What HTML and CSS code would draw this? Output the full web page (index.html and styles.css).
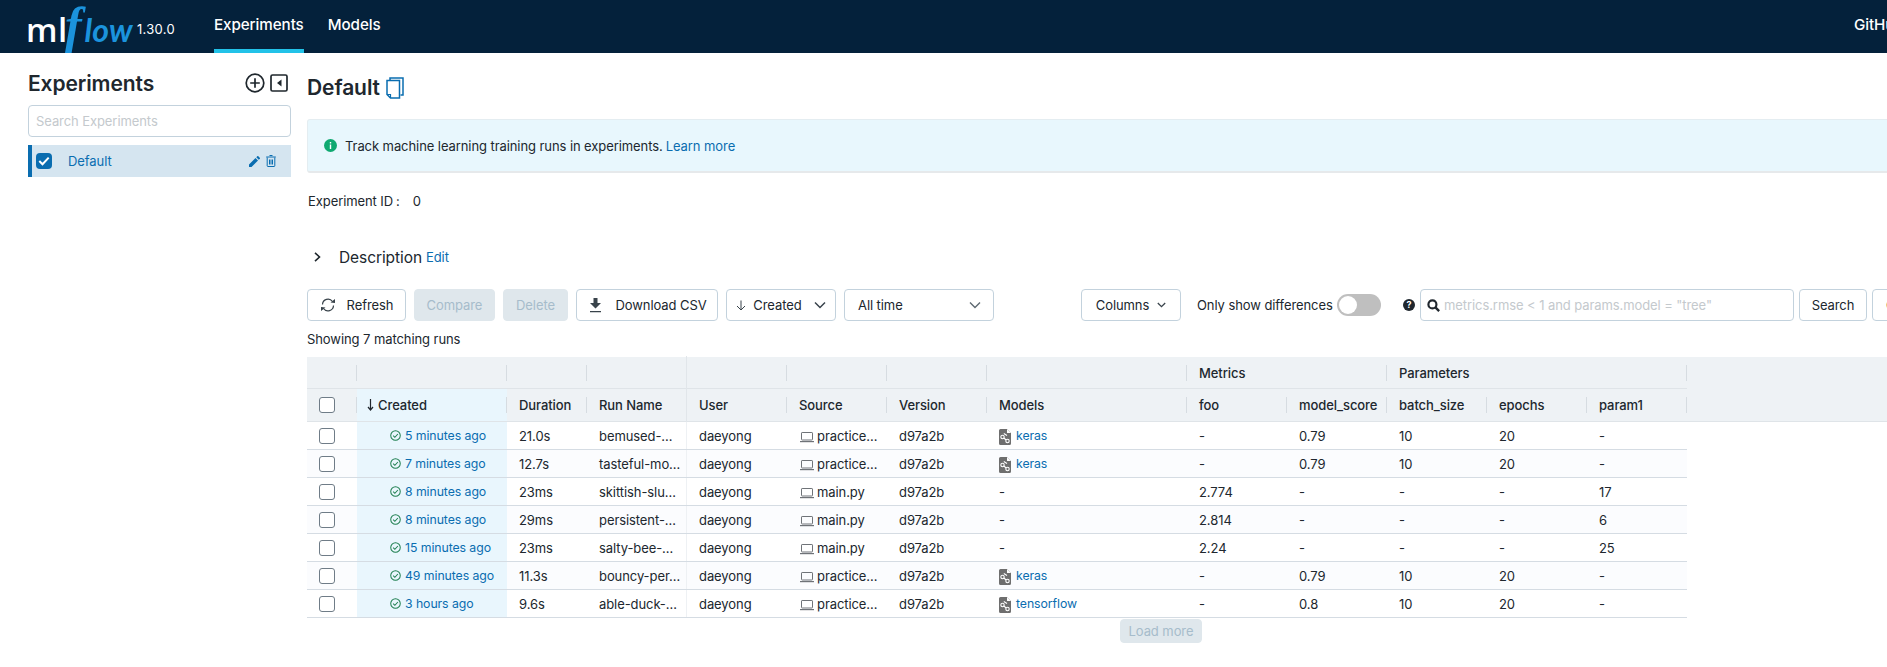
FILE: index.html
```html
<!DOCTYPE html>
<html lang="en">
<head>
<meta charset="utf-8">
<title>MLflow Experiments</title>
<link rel="stylesheet" href="styles.css">
</head>
<body>
<svg class="defs" width="0" height="0" aria-hidden="true">
  <symbol id="i-check" viewBox="0 0 12 12"><circle cx="6" cy="6" r="5.200" fill="none" stroke="#1f7f50" stroke-width="1.100"/><path d="M3.500 6.200 5.300 8 8.600 4.400" fill="none" stroke="#1f7f50" stroke-width="1.100"/></symbol>
  <symbol id="i-laptop" viewBox="0 0 14 12"><rect x="1.500" y="1.500" width="11" height="7.500" rx=".6" fill="none" stroke="#6f7378" stroke-width="1"/><path d="M0 10h14v1.200H0z" fill="#6f7378"/></symbol>
  <symbol id="i-model" viewBox="0 0 12 16"><path d="M1.500 0H8l4 4v10.500a1.500 1.500 0 0 1-1.500 1.500h-9A1.500 1.500 0 0 1 0 14.500V1.500A1.500 1.500 0 0 1 1.500 0z" fill="#6e6e6e"/><path d="M8 0v4h4z" fill="#fff"/><circle cx="3.500" cy="8" r="1.700" fill="none" stroke="#fff" stroke-width="1.100"/><circle cx="8.500" cy="12" r="1.700" fill="none" stroke="#fff" stroke-width="1.100"/><path d="M4.800 4.500 8 6.500M4.800 9 7.200 11" stroke="#fff" stroke-width="1.100"/></symbol>
</svg>
<div class="page">
  <header class="topbar">
    <a class="logo"><span class="logo-ml">ml</span><span class="logo-f">f</span><span class="logo-low">low</span></a>
    <span class="version">1.30.0</span>
    <nav class="tabs">
      <a class="tab tab-active">Experiments</a>
      <a class="tab">Models</a>
    </nav>
    <div class="top-right"><a class="tab">GitHub</a><a class="tab">Docs</a></div>
  </header>
  <div class="layout">
    <aside class="sidebar">
      <div class="side-head">
        <h1 class="side-title">Experiments</h1>
        <svg class="ic-plus" width="20" height="20" viewBox="0 0 20 20"><circle cx="10" cy="10" r="8.800" fill="none" stroke="#1f272d" stroke-width="1.700"/><path d="M10 5.200v9.600M5.200 10h9.600" stroke="#1f272d" stroke-width="1.700"/></svg>
        <svg class="ic-collapse" width="18" height="18" viewBox="0 0 18 18"><rect x="1" y="1" width="16" height="16" rx="1.500" fill="none" stroke="#1f272d" stroke-width="1.700"/><path d="M11.500 5.500v7L7 9z" fill="#1f272d"/></svg>
      </div>
      <div class="side-search">Search Experiments</div>
      <div class="side-item">
        <span class="side-check"><svg width="12" height="10" viewBox="0 0 12 10"><path d="M1.300 5 4.500 8.200 10.700 1.600" fill="none" stroke="#fff" stroke-width="2"/></svg></span>
        <span class="side-name">Default</span>
        <svg class="ic-pencil" width="11" height="11" viewBox="0 0 11 11"><path d="M0 11V8.500L6.500 2 9 4.500 2.500 11zM7.300 1.200 8.300.2a.7.7 0 0 1 1 0l1.500 1.500a.7.7 0 0 1 0 1l-1 1z" fill="#0a6db0"/></svg>
        <svg class="ic-trash" width="10" height="12" viewBox="0 0 10 12"><path d="M3.500.5h3M.2 2h9.600M1.200 2.500v8.300a.7.7 0 0 0 .7.700h6.200a.7.7 0 0 0 .7-.700V2.500M3.500 4.500v5M5 4.500v5M6.500 4.500v5" fill="none" stroke="#0a6db0" stroke-width="1"/></svg>
      </div>
    </aside>
    <main class="main">
      <div class="title-row">
        <h2 class="exp-title">Default</h2>
        <svg class="ic-copy" width="18" height="22" viewBox="0 0 18 22"><path d="M4 3V1h13v17h-2.500" fill="none" stroke="#0a6db0" stroke-width="1.500"/><path d="M1 3.500h12.500V21H4.500L1 17.500z" fill="none" stroke="#0a6db0" stroke-width="1.500"/><path d="M1 17.500h3.500V21" fill="none" stroke="#0a6db0" stroke-width="1.200"/></svg>
      </div>
      <div class="banner">
        <svg class="ic-info" width="13" height="13" viewBox="0 0 13 13"><circle cx="6.500" cy="6.500" r="6.500" fill="#0fa971"/><path d="M5.800 5.500h1.400v4.500H5.800zM5.800 3h1.400v1.400H5.800z" fill="#fff"/></svg>
        <span>Track machine learning training runs in experiments.</span>
        <a class="link banner-link">Learn more</a>
      </div>
      <div class="exp-id">Experiment ID<span class="colon">:</span>0</div>
      <div class="desc-row">
        <svg class="ic-chev" width="7" height="10" viewBox="0 0 7 10"><path d="M1 .8 5.500 5 1 9.200" fill="none" stroke="#1f272d" stroke-width="1.600"/></svg>
        <span class="desc-text">Description</span>
        <a class="link">Edit</a>
      </div>
      <div class="toolbar">
        <button class="btn w-refresh"><svg width="16" height="14" viewBox="0 0 16 14"><path d="M2.500 6.500A5.500 5.500 0 0 1 12.500 3.500M13.500 7.500A5.500 5.500 0 0 1 3.500 10.500" fill="none" stroke="#39434b" stroke-width="1.200"/><path d="M10.500 4.500 15 5V1zM5.500 9.500 1 9v4z" fill="#39434b"/></svg>Refresh</button>
        <button class="btn btn-off w-compare">Compare</button>
        <button class="btn btn-off w-delete">Delete</button>
        <button class="btn w-download"><svg width="13" height="15" viewBox="0 0 13 15"><path d="M4.500 0h4v5H12L6.500 10.500 1 5h3.500zM1 13h11v1.300H1z" fill="#39434b"/></svg>Download CSV</button>
        <button class="btn w-created"><svg width="10" height="11" viewBox="0 0 10 11"><path d="M5 .5v9.500M1 6l4 4 4-4" fill="none" stroke="#39434b" stroke-width="1"/></svg>Created<svg class="caret" width="12" height="8" viewBox="0 0 12 8"><path d="M1 1.500 6 6.500l5-5" fill="none" stroke="#39434b" stroke-width="1.500"/></svg></button>
        <button class="btn w-time"><span>All time</span><svg width="12" height="8" viewBox="0 0 12 8"><path d="M1 1.500 6 6.500l5-5" fill="none" stroke="#5f6a72" stroke-width="1.400"/></svg></button>
        <button class="btn w-columns">Columns<svg width="9" height="6" viewBox="0 0 9 6"><path d="M.8 1 4.500 4.700 8.200 1" fill="none" stroke="#39434b" stroke-width="1.300"/></svg></button>
        <span class="diff-label">Only show differences</span>
        <span class="switch"><span class="knob"></span></span>
        <svg class="ic-help" width="12" height="12" viewBox="0 0 12 12"><circle cx="6" cy="6" r="6" fill="#20272e"/><text x="6" y="9.200" class="help-mark">?</text></svg>
        <div class="search-box">
          <svg width="13" height="13" viewBox="0 0 12 12"><circle cx="5" cy="5" r="3.700" fill="none" stroke="#20272e" stroke-width="2"/><path d="M7.800 7.800 11.200 11.200" stroke="#20272e" stroke-width="2.200"/></svg>
          <span class="placeholder">metrics.rmse &lt; 1 and params.model = "tree"</span>
        </div>
        <button class="btn w-search">Search</button>
        <button class="btn w-clear">Clear</button>
      </div>
      <div class="showing">Showing 7 matching runs</div>
      <div class="grid">
        <div class="row head head1">
          <div class="hc"></div><div class="hc"></div><div class="hc"></div><div class="hc group-end"></div><div class="hc"></div><div class="hc"></div><div class="hc"></div><div class="hc"></div><div class="hc span-2">Metrics</div><div class="hc span-3">Parameters</div>
        </div>
        <div class="row head head2">
          <div class="hc"><span class="cb"></span></div>
          <div class="hc sorted"><svg class="sort-ic" width="7" height="12" viewBox="0 0 7 12"><path d="M3.500 0v11M1 8l2.500 3L6 8" fill="none" stroke="#20272e" stroke-width="1.200"/></svg>Created</div>
          <div class="hc">Duration</div><div class="hc">Run Name</div><div class="hc">User</div><div class="hc">Source</div><div class="hc">Version</div><div class="hc">Models</div><div class="hc">foo</div><div class="hc">model_score</div><div class="hc">batch_size</div><div class="hc">epochs</div><div class="hc">param1</div>
        </div>

        <div class="row body">
          <div class="c"><span class="cb"></span></div>
          <div class="c created"><svg class="st"><use href="#i-check"/></svg><a class="link">5 minutes ago</a></div>
          <div class="c">21.0s</div><div class="c run">bemused-…</div><div class="c">daeyong</div>
          <div class="c"><svg class="lap"><use href="#i-laptop"/></svg>practice…</div><div class="c">d97a2b</div>
          <div class="c"><svg class="mod"><use href="#i-model"/></svg><a class="link">keras</a></div>
          <div class="c">-</div><div class="c">0.79</div><div class="c">10</div><div class="c">20</div><div class="c">-</div>
        </div>
        <div class="row body alt">
          <div class="c"><span class="cb"></span></div>
          <div class="c created"><svg class="st"><use href="#i-check"/></svg><a class="link">7 minutes ago</a></div>
          <div class="c">12.7s</div><div class="c run">tasteful-mo…</div><div class="c">daeyong</div>
          <div class="c"><svg class="lap"><use href="#i-laptop"/></svg>practice…</div><div class="c">d97a2b</div>
          <div class="c"><svg class="mod"><use href="#i-model"/></svg><a class="link">keras</a></div>
          <div class="c">-</div><div class="c">0.79</div><div class="c">10</div><div class="c">20</div><div class="c">-</div>
        </div>
        <div class="row body">
          <div class="c"><span class="cb"></span></div>
          <div class="c created"><svg class="st"><use href="#i-check"/></svg><a class="link">8 minutes ago</a></div>
          <div class="c">23ms</div><div class="c run">skittish-slu…</div><div class="c">daeyong</div>
          <div class="c"><svg class="lap"><use href="#i-laptop"/></svg>main.py</div><div class="c">d97a2b</div>
          <div class="c">-</div>
          <div class="c">2.774</div><div class="c">-</div><div class="c">-</div><div class="c">-</div><div class="c">17</div>
        </div>
        <div class="row body alt">
          <div class="c"><span class="cb"></span></div>
          <div class="c created"><svg class="st"><use href="#i-check"/></svg><a class="link">8 minutes ago</a></div>
          <div class="c">29ms</div><div class="c run">persistent-…</div><div class="c">daeyong</div>
          <div class="c"><svg class="lap"><use href="#i-laptop"/></svg>main.py</div><div class="c">d97a2b</div>
          <div class="c">-</div>
          <div class="c">2.814</div><div class="c">-</div><div class="c">-</div><div class="c">-</div><div class="c">6</div>
        </div>
        <div class="row body">
          <div class="c"><span class="cb"></span></div>
          <div class="c created"><svg class="st"><use href="#i-check"/></svg><a class="link">15 minutes ago</a></div>
          <div class="c">23ms</div><div class="c run">salty-bee-…</div><div class="c">daeyong</div>
          <div class="c"><svg class="lap"><use href="#i-laptop"/></svg>main.py</div><div class="c">d97a2b</div>
          <div class="c">-</div>
          <div class="c">2.24</div><div class="c">-</div><div class="c">-</div><div class="c">-</div><div class="c">25</div>
        </div>
        <div class="row body alt">
          <div class="c"><span class="cb"></span></div>
          <div class="c created"><svg class="st"><use href="#i-check"/></svg><a class="link">49 minutes ago</a></div>
          <div class="c">11.3s</div><div class="c run">bouncy-per…</div><div class="c">daeyong</div>
          <div class="c"><svg class="lap"><use href="#i-laptop"/></svg>practice…</div><div class="c">d97a2b</div>
          <div class="c"><svg class="mod"><use href="#i-model"/></svg><a class="link">keras</a></div>
          <div class="c">-</div><div class="c">0.79</div><div class="c">10</div><div class="c">20</div><div class="c">-</div>
        </div>
        <div class="row body">
          <div class="c"><span class="cb"></span></div>
          <div class="c created"><svg class="st"><use href="#i-check"/></svg><a class="link">3 hours ago</a></div>
          <div class="c">9.6s</div><div class="c run">able-duck-…</div><div class="c">daeyong</div>
          <div class="c"><svg class="lap"><use href="#i-laptop"/></svg>practice…</div><div class="c">d97a2b</div>
          <div class="c"><svg class="mod"><use href="#i-model"/></svg><a class="link">tensorflow</a></div>
          <div class="c">-</div><div class="c">0.8</div><div class="c">10</div><div class="c">20</div><div class="c">-</div>
        </div>
        <div class="load-row"><button class="btn btn-off w-load">Load more</button></div>
      </div>
    </main>
  </div>
</div>
</body>
</html>
```

FILE: styles.css
```css
* { box-sizing: border-box; }
html, body { margin: 0; padding: 0; height: 100%; overflow: hidden; background: #fff; }
body { font-family: Inter, "Noto Sans", "Liberation Sans", sans-serif; font-size: 13px; color: #20272e; letter-spacing: -.08px; }
.defs { display: block; height: 0; }
.page { width: 2000px; }
a { text-decoration: none; }
.link { color: #0a6db0; }

/* Top bar */
.topbar { height: 53px; background: #04213b; display: flex; align-items: stretch; padding-left: 26px; color: #fff; }
.logo { display: flex; align-items: baseline; width: 111px; height: 53px; line-height: 50px; overflow: visible; }
.logo-ml { font-family: "Open Sans", sans-serif; font-weight: 600; font-size: 33px; color: #fff; letter-spacing: .6px; }
.logo-f { font-family: "Liberation Serif", serif; font-style: italic; font-weight: 700; font-size: 50px; color: #1b93dd; margin: 0 3px 0 -3px; }
.logo-low { font-family: Lato, sans-serif; font-style: italic; font-weight: 700; font-size: 32px; color: #1b93dd; letter-spacing: .2px; }
.version { font-size: 13px; align-self: center; margin-top: 5px; width: 77px; letter-spacing: .3px; }
.tabs { display: flex; gap: 24px; }
.tab { color: #fff; font-size: 15.200px; font-weight: 500; display: flex; align-items: center; height: 53px; padding-bottom: 4px; }
.tab-active { border-bottom: 4px solid #22c2e8; padding-bottom: 0; }
.top-right { margin-left: auto; width: 146px; display: flex; gap: 24px; }

/* Layout */
.layout { display: flex; padding-left: 28px; gap: 16px; }
.sidebar { width: 263px; flex: none; }
.main { flex: 1; min-width: 0; }

/* Sidebar */
.side-head { height: 52px; display: flex; align-items: center; padding-top: 10px; }
.side-title { font-size: 21px; font-weight: 600; margin: 0; line-height: 28px; flex: 1; letter-spacing: -.1px; }
.ic-plus { margin-top: -2px; }
.ic-collapse { margin: -2px 3px 0 5px; }
.side-search { height: 32px; border: 1px solid #c3d2dd; border-radius: 4px; padding: 0 7px; line-height: 30px; color: #c4c9cd; }
.side-item { margin-top: 8px; height: 32px; background: #d5e5f0; border-left: 4px solid #0a6db0; display: flex; align-items: center; padding-left: 4px; }
.side-check { width: 16px; height: 16px; border-radius: 4px; background: #0a6db0; display: flex; align-items: center; justify-content: center; }
.side-name { color: #0a6db0; margin-left: 16px; flex: 1; }
.ic-trash { margin: 0 15px 0 6px; }

/* Main */
.title-row { height: 66px; display: flex; align-items: center; gap: 6px; padding-top: 4px; }
.exp-title { font-size: 21px; font-weight: 600; margin: 0; line-height: 28px; }
.banner { height: 54px; background: #e8f7fd; border: 1px solid #e4edf1; border-bottom: 2px solid #e6e9eb; border-radius: 3px 0 0 3px; display: flex; align-items: center; padding-left: 16px; }
.ic-info { margin-right: 8px; }
.banner-link { margin-left: 3px; }
.exp-id { height: 16px; margin-top: 20px; line-height: 16px; padding-left: 1px; }
.colon { margin: 0 13px 0 3px; }
.desc-row { height: 24px; margin-top: 36px; display: flex; align-items: center; padding-left: 7px; gap: 4px; }
.ic-chev { margin-right: 14px; }
.desc-text { font-size: 15.500px; }
.toolbar { height: 32px; margin-top: 20px; display: flex; align-items: center; gap: 8px; }
.btn { height: 32px; border: 1px solid #c3d2dd; border-radius: 4px; background: #fff; color: #20272e; font: inherit; letter-spacing: inherit; display: flex; align-items: center; justify-content: center; gap: 9px; padding: 0; white-space: nowrap; flex: none; }
.btn-off { background: #dfe7ec; border-color: #dfe7ec; color: #a6bccb; }
.w-refresh { width: 99px; gap: 11px; }
.w-compare { width: 81px; }
.w-delete { width: 65px; }
.w-download { width: 142px; gap: 13px; padding-left: 2px; }
.w-created { width: 110px; gap: 7px; }
.caret { margin-left: 5px; }
.w-time { width: 150px; justify-content: space-between; padding: 0 12px 0 13px; }
.w-columns { width: 100px; margin-left: 79px; gap: 8px; }
.diff-label { margin-left: 8px; width: 140px; }
.switch { width: 44px; height: 22px; border-radius: 11px; background: #bfbfbf; margin-left: -8px; padding: 2px; flex: none; }
.knob { display: block; width: 18px; height: 18px; border-radius: 50%; background: #fff; }
.ic-help { margin-left: 14px; flex: none; }
.help-mark { font-size: 9px; font-weight: 700; fill: #fff; text-anchor: middle; }
.search-box { width: 374px; height: 32px; border: 1px solid #c3d2dd; border-radius: 4px; display: flex; align-items: center; gap: 4px; padding-left: 6px; margin-left: -3px; flex: none; }
.placeholder { color: #c4c9cd; }
.w-search { width: 68px; margin-left: -3px; }
.w-clear { width: 60px; margin-left: -3px; }
.showing { height: 16px; margin-top: 10px; line-height: 16px; }

/* Runs grid */
.grid { margin-top: 10px; }
.row { display: grid; grid-template-columns: 50px 150px 80px 100px 100px 100px 100px 200px 100px 100px 100px 100px 100px; }
.head { background: #eef2f5; }
.head1 { height: 32px; }
.head1 .hc { border-bottom: 1px solid #dfe4e8; }
.head2 { height: 33px; border-bottom: 1px solid #dfe4e8; }
.hc { position: relative; padding-left: 12px; display: flex; align-items: center; font-weight: 500; white-space: nowrap; }
.hc::after { content: ""; position: absolute; right: 0; top: 8px; height: 16px; width: 1px; background: #d6dce1; }
.group-end::after, .head2 .hc:nth-child(4)::after { top: -1px; height: calc(100% + 2px); background: #e1e6ea; }
.span-2 { grid-column: span 2; }
.span-3 { grid-column: span 3; }
.sorted { background: #e9f6fd; gap: 4px; padding-left: 10px; }
.sort-ic { flex: none; }
.cb { display: block; width: 16px; height: 16px; background: #fff; border: 1.500px solid #6f7c87; border-radius: 3px; }
.body { width: 1380px; height: 28px; border-bottom: 1px solid #d5dce3; }
.alt { background: #fbfcfe; }
.c { display: flex; align-items: center; padding-left: 12px; white-space: nowrap; overflow: hidden; }
.c:nth-child(4) { border-right: 1px solid #eef1f4; }
.c .link { font-size: 12.300px; }
.created { background: #e9f6fd; padding-left: 33px; }
.st { width: 11px; height: 11px; margin-right: 4px; flex: none; }
.lap { width: 14px; height: 12px; margin: 2px 3px 0 1px; flex: none; }
.mod { width: 12px; height: 16px; margin: 2px 5px 0 0; flex: none; }
.load-row { width: 1708px; display: flex; justify-content: center; padding-top: 1px; }
.w-load { width: 82px; height: 24px; }
```
